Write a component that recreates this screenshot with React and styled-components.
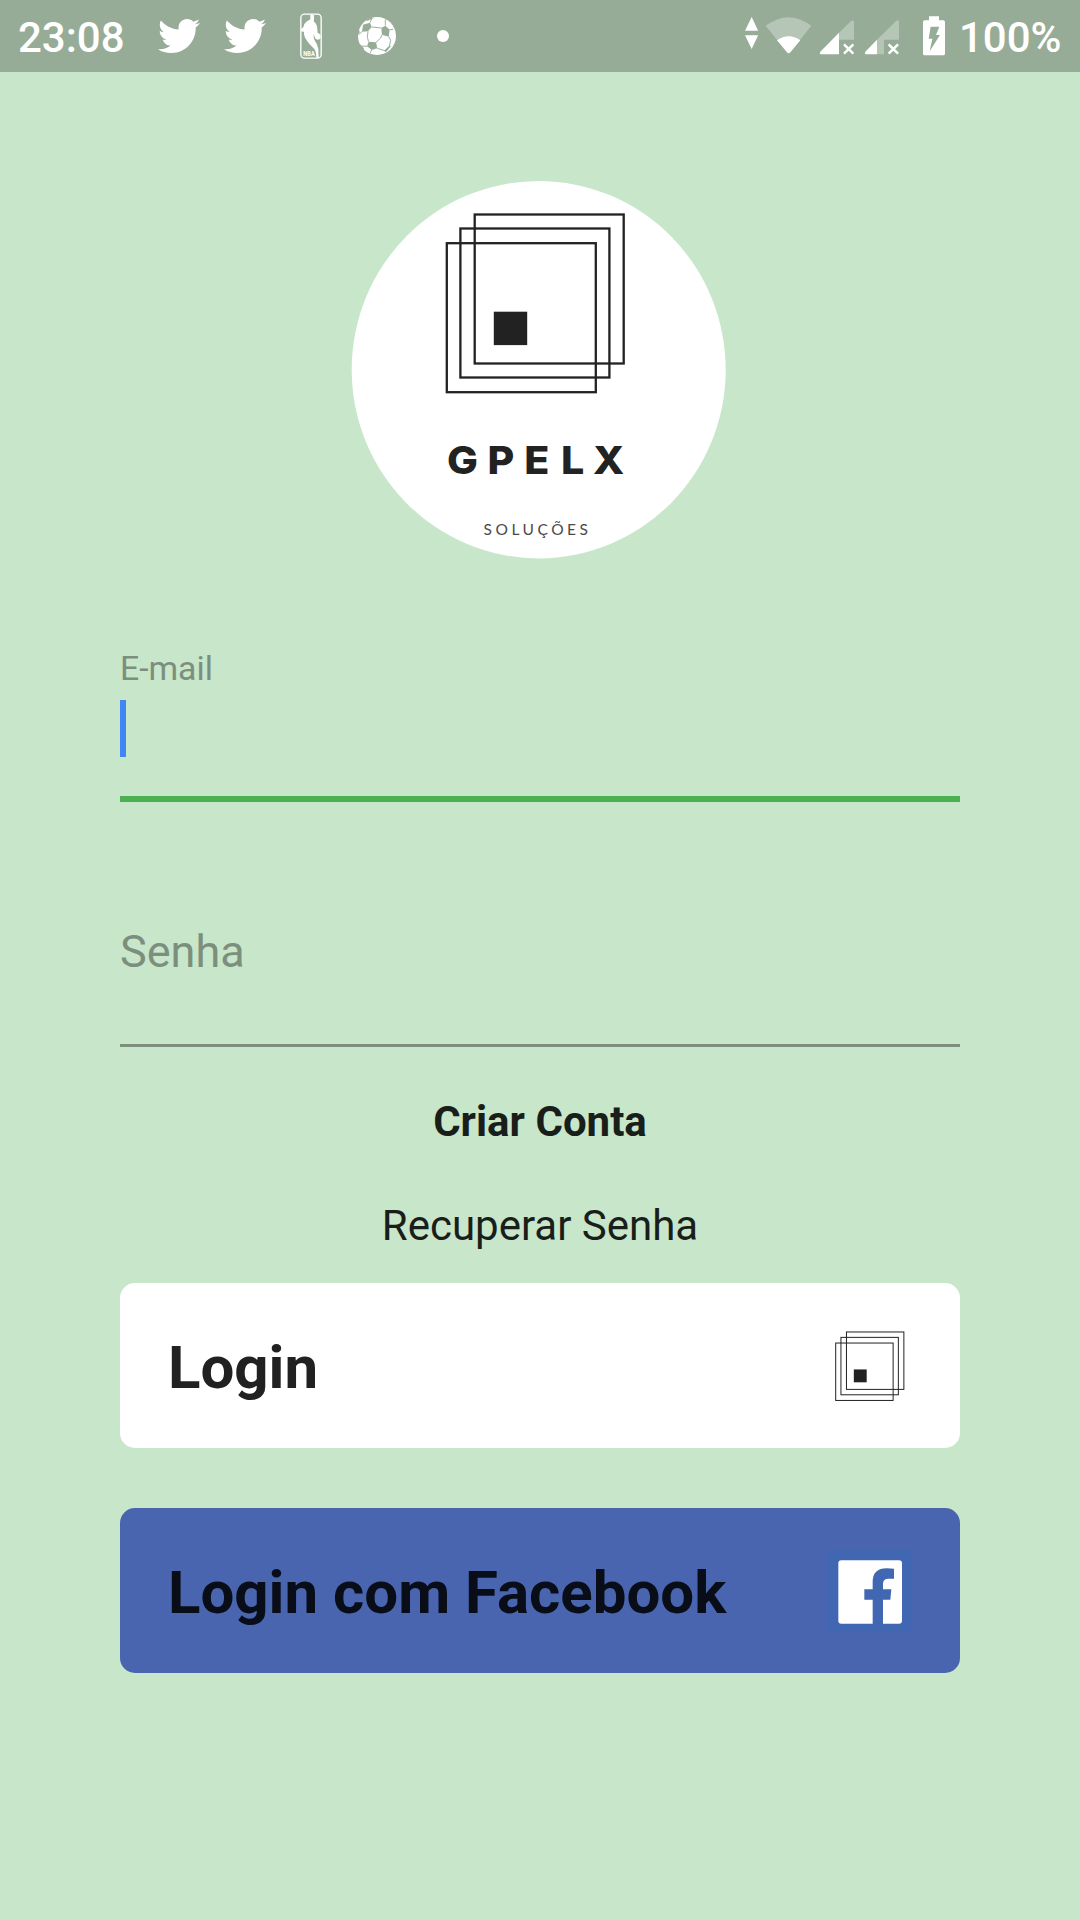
import React from "react";
import styled, { createGlobalStyle } from "styled-components";
import { FaTwitter } from "react-icons/fa";

const GlobalStyle = createGlobalStyle`
  * { box-sizing: border-box; }
  body { margin: 0; background: #c8e6c9; font-family: Roboto, sans-serif; }
`;

const Screen = styled.div`
  width: 1080px;
  height: 1920px;
  display: flex;
  flex-direction: column;
  background: #c8e6c9;
  overflow: hidden;
`;

const StatusBar = styled.header`
  height: 72px;
  flex: none;
  display: flex;
  align-items: center;
  justify-content: space-between;
  padding: 0 18px;
  background: #96ac97;
  color: #fff;
`;

const StatusGroup = styled.div`
  display: flex;
  align-items: center;
  height: 72px;
  svg { display: block; flex: none; }
`;

const StatusText = styled.span`
  font-size: 42px;
  font-weight: 500;
  line-height: 50px;
  padding-top: 4px;
  width: ${(p) => p.$width};
  white-space: nowrap;
`;

const Slot = styled.span`
  display: flex;
  margin-left: ${(p) => p.$gap}px;
`;

const Main = styled.main`
  display: flex;
  flex-direction: column;
  padding: 109px 120px 0;
`;

const LogoRow = styled.div`
  display: flex;
  justify-content: center;
  height: 378px;
`;

const Field = styled.label`
  display: flex;
  flex-direction: column;
  height: ${(p) => p.$height}px;
  margin-top: ${(p) => p.$top}px;
  border-bottom: ${(p) => (p.$focused ? "6px solid #4caf50" : "3px solid #7c8f7d")};
`;

const FieldLabel = styled.span`
  color: #7c8f7d;
  font-size: ${(p) => (p.$floating ? "33.75px" : "45px")};
  line-height: ${(p) => (p.$floating ? "40px" : "54px")};
`;

const Caret = styled.span`
  width: 6px;
  height: 57px;
  margin-top: 11px;
  background: #4285f4;
`;

const TextLink = styled.a`
  display: block;
  margin-top: ${(p) => p.$top}px;
  text-align: center;
  font-size: 42px;
  line-height: 50px;
  font-weight: ${(p) => (p.$bold ? 700 : 400)};
  color: #1a1e1a;
`;

const Button = styled.button`
  display: flex;
  align-items: center;
  justify-content: space-between;
  height: 165px;
  margin: ${(p) => p.$top}px 0 0;
  padding: 0 48px;
  border: 0;
  border-radius: 15px;
  background: ${(p) => p.$bg};
  color: ${(p) => p.$fg};
  font: 700 60px/70px Roboto, sans-serif;
  text-align: left;
  svg { display: block; flex: none; }
`;

const ButtonText = styled.span`
  padding-top: 5px;
`;

function NbaIcon() {
  return (
    <svg width="22" height="46" viewBox="60 37 66 138">
      <rect x="62.500" y="40.500" width="61" height="132" rx="11" fill="none" stroke="#fff" strokeWidth="4" />
      <path
        fill="#fff"
        d="M91 42 q6 -3 11 2 l0 13 q-2 4 1 7 q6 4 8 13 l2 20 q9 2 9 11 q-1 9 -9 9 q-7 0 -9 -8 l-3 -9 q-1 9 2 17 q9 12 12 28 l1 27 h-7 q0 -19 -6 -27 q-19 -17 -28 -34 q-5 -11 -3 -18 q-9 2 -10 -5 q4 -7 8 -8 q2 -12 11 -18 q7 -3 10 -6 z"
      />
      <text x="70" y="165" fontSize="22" fontWeight="700" fontFamily="Roboto, sans-serif" fill="#fff" textLength="34" lengthAdjust="spacingAndGlyphs">NBA</text>
    </svg>
  );
}

function BallIcon() {
  return (
    <svg width="38" height="38" viewBox="234 51 114 114">
      <circle cx="291" cy="108" r="57" fill="#fff" />
      <g fill="#96ac97">
        <path d="M249 74 L270 68 L275 81 L264 94 L246 95 Z" />
        <path d="M304 84 L316 77 L329 89 L326 110 L306 104 Z" />
        <path d="M266 125 L288 127 L292 145 L275 150 L261 139 Z" />
        <path d="M270 53 L283 53 L273 58 L264 62 L257 63 Z" />
        <path d="M234 103 L239 98 L238 90 L232 94 Z" />
        <path d="M328 137 L333 138 L318 157 L312 152 Z" />
        <path d="M239 132 L247 138 L253 148 L248 150 Z" />
      </g>
      <g stroke="#96ac97" strokeWidth="2.800" fill="none">
        <path d="M270 68 L276 54 M275 81 L304 84 M264 94 L262 112 L266 125 M246 95 L236 104 M316 77 L316 58 M329 89 L340 88 M306 104 L302 114 L288 127 M326 110 L332 121 L328 138 M292 145 L314 152 M261 139 L247 138 M275 150 L270 160" />
      </g>
    </svg>
  );
}

function SignalCluster() {
  return (
    <svg width="216" height="42" viewBox="0 44 648 126">
      <g fill="#fff">
        <path d="M65 50 L84.500 91 H45 Z M45 105 H84.500 L65 146 Z" />
        <path fillOpacity=".3" d="M107 76 Q176 25 244 76 L181 156 Q176 162 171 156 Z" />
        <path d="M141 120 Q176 96 211 120 L181 156 Q176 162 171 156 Z" />
        <path fillOpacity=".3" d="M327 97 L364 61 Q372 57 372 65 V118 H327 Z" />
        <path d="M327 97 V162 H272 Q267 160 271 154 Z" />
        <path fillOpacity=".3" d="M441 118 L499 61 Q507 57 507 65 V118 H462 V162 H441 Z" />
        <path d="M441 118 V162 H407 Q402 160 406 154 Z" />
        <path stroke="#fff" strokeWidth="7.500" d="M342 132 L370 160 M370 132 L342 160 M476 132 L504 160 M504 132 L476 160" />
        <path fillRule="evenodd" d="M597 48 H627 V60 H640 Q645 60 645 65 V160 Q645 165 640 165 H584 Q579 165 579 160 V65 Q579 60 584 60 H597 Z M602 79 L596 115 H607 L599 153 L630 104 H618 L628 79 Z" />
      </g>
    </svg>
  );
}

function LogoSquares({ stroke }) {
  return (
    <g>
      <g fill="none" stroke="#222" strokeWidth={stroke}>
        <rect x="446.800" y="243.200" width="149" height="149" />
        <rect x="460.400" y="228.500" width="149" height="149" />
        <rect x="474.700" y="214.500" width="149" height="149" />
      </g>
      <rect x="493.800" y="311.700" width="33.400" height="33.400" fill="#222" />
    </g>
  );
}

function BrandLogo() {
  return (
    <svg width="378" height="378" viewBox="351 181 378 378">
      <ellipse cx="538.700" cy="369.700" rx="187" ry="188.700" fill="#fff" />
      <LogoSquares stroke="2.300" />
      <g transform="translate(448 0) scale(1.06 1)">
        <text x="-1 37.300 72 106.600 136.800" y="474.400" fontFamily="Inter, sans-serif" fontWeight="800" fontSize="38.800" fill="#222">GPELX</text>
      </g>
      <text x="483.500" y="534.700" fontFamily="Lato, sans-serif" fontSize="15.500" fill="#4a4a4a" textLength="104.500" lengthAdjust="spacing">SOLUÇÕES</text>
    </svg>
  );
}

function FacebookIcon() {
  return (
    <svg width="84" height="84" viewBox="144 176.500 252 252">
      <rect x="144" y="180" width="252" height="244" fill="#4267b2" />
      <rect x="175" y="210" width="191" height="191" rx="9" fill="#fff" />
      <path fill="#4267b2" d="M278 403 V329 H253 V297 H278 V275 Q278 234 320 234 Q333 234 342 236 V266 H326 Q309 266 309 281 V297 H334 L331 329 H309 V403 Z" />
    </svg>
  );
}

export default function App() {
  return (
    <Screen>
      <GlobalStyle />
      <StatusBar>
        <StatusGroup>
          <StatusText $width="140px">23:08</StatusText>
          <FaTwitter size={42} />
          <Slot $gap={24}><FaTwitter size={42} /></Slot>
          <Slot $gap={34}><NbaIcon /></Slot>
          <Slot $gap={36}><BallIcon /></Slot>
          <Slot $gap={41}>
            <svg width="12" height="12"><circle cx="6" cy="6" r="6" fill="#fff" /></svg>
          </Slot>
        </StatusGroup>
        <StatusGroup>
          <SignalCluster />
          <Slot $gap={13}><StatusText $width="103px">100%</StatusText></Slot>
        </StatusGroup>
      </StatusBar>
      <Main>
        <LogoRow><BrandLogo /></LogoRow>
        <Field $focused $top={90} $height={153}>
          <FieldLabel $floating>E-mail</FieldLabel>
          <Caret />
        </Field>
        <Field $top={123} $height={122}>
          <FieldLabel>Senha</FieldLabel>
        </Field>
        <TextLink $bold $top={50}>Criar Conta</TextLink>
        <TextLink $top={54}>Recuperar Senha</TextLink>
        <Button $top={32} $bg="#fff" $fg="#212121">
          <ButtonText>Login</ButtonText>
          <svg width="84" height="84" viewBox="426.800 193.800 218 218">
            <LogoSquares stroke="2.600" />
          </svg>
        </Button>
        <Button $top={60} $bg="#4965b0" $fg="#090d17">
          <ButtonText>Login com Facebook</ButtonText>
          <FacebookIcon />
        </Button>
      </Main>
    </Screen>
  );
}
